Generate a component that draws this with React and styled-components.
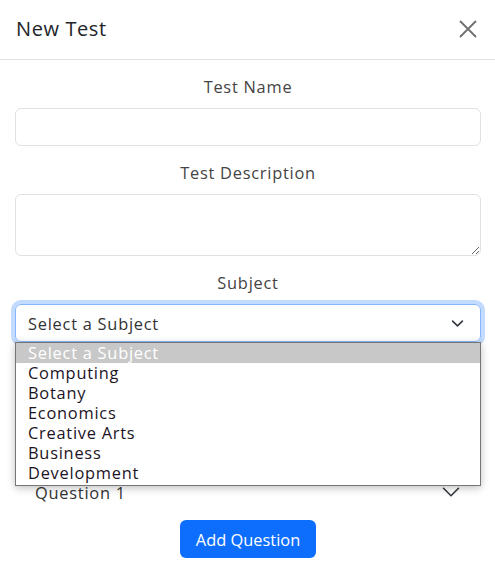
import React from 'react';
import styled, { createGlobalStyle } from 'styled-components';

const GlobalStyle = createGlobalStyle`
  html, body {
    margin: 0;
    padding: 0;
    background: #fff;
  }

  body {
    font-family: "Open Sans", "Liberation Sans", sans-serif;
    font-size: 16.4px;
    color: #212529;
    letter-spacing: 0.75px;
  }

  * {
    box-sizing: border-box;
  }
`;

const SUBJECTS = [
  'Select a Subject',
  'Computing',
  'Botany',
  'Economics',
  'Creative Arts',
  'Business',
  'Development',
];

const Modal = styled.div`
  width: 495px;
  background: #fff;
`;

const Header = styled.div`
  height: 60px;
  padding: 0 15px 0 16px;
  display: flex;
  align-items: center;
  justify-content: space-between;
  border-bottom: 1px solid #dee2e6;
`;

const Title = styled.h5`
  margin: 0 0 2px;
  font-size: 20px;
  font-weight: 400;
  line-height: 30px;
  letter-spacing: 0.6px;
  color: #212529;
`;

const CloseButton = styled.button`
  width: 24px;
  height: 24px;
  padding: 0;
  border: 0;
  background: transparent;
  display: flex;
  align-items: center;
  justify-content: center;
  margin-bottom: 2px;
  cursor: pointer;
`;

const Body = styled.div`
  padding: 15px 14px 16px 15px;
`;

const Group = styled.div`
  position: relative;
  margin-bottom: 15px;
`;

const Label = styled.label`
  display: block;
  text-align: center;
  line-height: 24px;
  margin-bottom: 9px;
  color: #444;
`;

const Input = styled.input`
  display: block;
  width: 100%;
  height: 38px;
  border: 1px solid #dee2e6;
  border-radius: 6px;
  padding: 6px 12px;
  font: inherit;
  outline: none;
`;

const TextArea = styled.textarea`
  display: block;
  width: 100%;
  height: 62px;
  border: 1px solid #dee2e6;
  border-radius: 6px;
  padding: 6px 12px;
  font: inherit;
  resize: vertical;
  outline: none;
`;

const SelectBox = styled.div`
  height: 38px;
  display: flex;
  align-items: center;
  justify-content: space-between;
  padding: 0 16px 0 12px;
  border: 1px solid #86b7fe;
  border-radius: 6px;
  box-shadow: 0 0 0 4px rgba(13, 110, 253, 0.25);
  color: #333;
`;

const OptionList = styled.ul`
  position: absolute;
  top: 100%;
  left: 0;
  right: 0;
  margin: 0;
  padding: 0 0 2px;
  list-style: none;
  background: #fff;
  border: 1px solid #767676;
  box-shadow: 0 2px 8px rgba(0, 0, 0, 0.25);
  z-index: 10;
`;

const Option = styled.li`
  height: 20px;
  line-height: 20px;
  padding-left: 12px;
  color: ${(props) => (props.selected ? '#fff' : '#1c1424')};
  background: ${(props) => (props.selected ? '#c8c8c8' : '#fff')};
`;

const Questions = styled.div`
  margin-top: 122px;
`;

const AccordionButton = styled.div`
  height: 56px;
  display: flex;
  align-items: center;
  justify-content: space-between;
  padding: 0 20px;
  color: #333;
`;

const Footer = styled.div`
  display: flex;
  justify-content: center;
`;

const PrimaryButton = styled.button`
  height: 38px;
  padding: 0 16px;
  border: 0;
  border-radius: 6px;
  background: #0d6efd;
  color: #fff;
  font: inherit;
  cursor: pointer;
`;

const CloseIcon = () => (
  <svg width="18" height="18" viewBox="0 0 18 18">
    <path d="M1 1L17 17M17 1L1 17" stroke="#6f6f6f" strokeWidth="1.8" fill="none" />
  </svg>
);

const Chevron = ({ size = 14, width = 2 }) => (
  <svg width={size} height={size} viewBox="0 0 16 16">
    <path
      d="M2 5l6 6 6-6"
      stroke="#343a40"
      strokeWidth={width}
      fill="none"
      strokeLinecap="round"
      strokeLinejoin="round"
    />
  </svg>
);

const App = () => (
  <>
    <GlobalStyle />
    <Modal>
      <Header>
        <Title>New Test</Title>
        <CloseButton aria-label="Close">
          <CloseIcon />
        </CloseButton>
      </Header>
      <Body>
        <Group>
          <Label>Test Name</Label>
          <Input type="text" />
        </Group>
        <Group>
          <Label>Test Description</Label>
          <TextArea />
        </Group>
        <Group>
          <Label>Subject</Label>
          <SelectBox>
            Select a Subject
            <Chevron size={13} />
          </SelectBox>
          <OptionList>
            {SUBJECTS.map((subject, i) => (
              <Option key={subject} selected={i === 0}>{subject}</Option>
            ))}
          </OptionList>
        </Group>
        <Questions>
          <AccordionButton>
            Question 1
            <Chevron size={20} width={1.3} />
          </AccordionButton>
        </Questions>
        <Footer>
          <PrimaryButton>Add Question</PrimaryButton>
        </Footer>
      </Body>
    </Modal>
  </>
);

export default App;
